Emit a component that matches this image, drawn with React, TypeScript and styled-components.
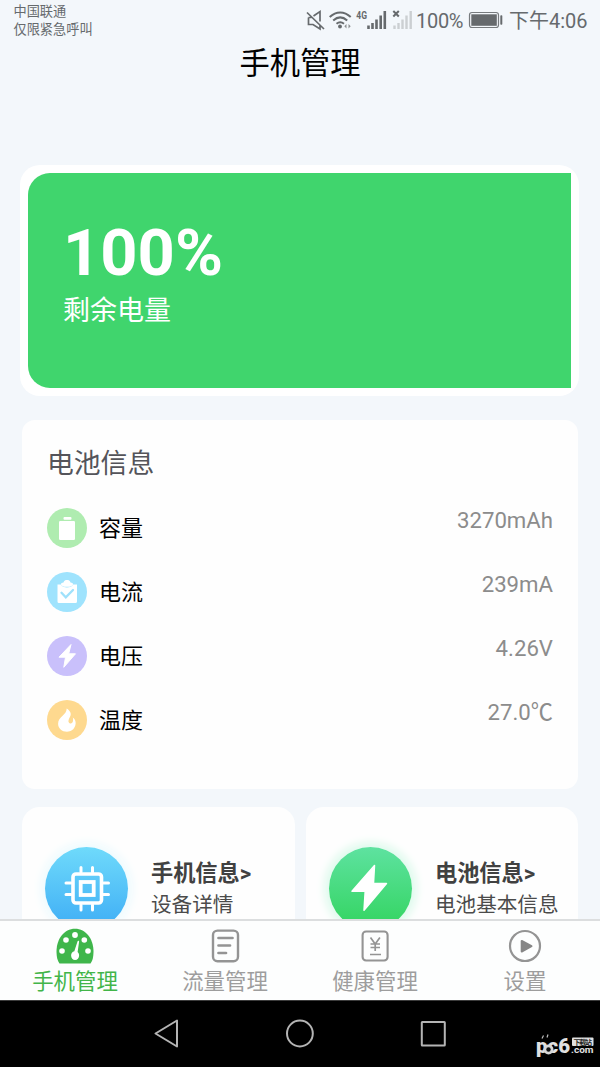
import React from "react";
import styled, { createGlobalStyle } from "styled-components";

const GlobalStyle = createGlobalStyle`
  * { box-sizing: border-box; }
  body { margin: 0; background: #f3f7fb; }
`;

const Screen = styled.div`
  width: 600px;
  height: 1067px;
  display: flex;
  flex-direction: column;
  overflow: hidden;
  background: #f3f7fb;
  font-family: Roboto, "Noto Sans CJK SC", sans-serif;
  color: #000;
  white-space: nowrap;
`;

const StatusBar = styled.header`
  height: 42px;
  flex: none;
  display: flex;
  justify-content: space-between;
  padding: 3px 13px 0 13.5px;
  color: #666a6d;
`;

const Carrier = styled.div`
  font-size: 13.2px;
  line-height: 18px;
`;

const StatusIcons = styled.div`
  display: flex;
  align-items: flex-start;
  height: 36px;
  svg { display: block; flex: none; }
`;

const StatusText = styled.span<{ $width: number; $spacing?: number }>`
  width: ${(p) => p.$width}px;
  font-size: 20px;
  line-height: 36px;
  letter-spacing: ${(p) => p.$spacing ?? 0}px;
`;

const PageTitle = styled.h1`
  margin: 0;
  height: 44px;
  flex: none;
  text-align: center;
  font-size: 30.3px;
  font-weight: 400;
  line-height: 44px;
`;

const Content = styled.main`
  height: 833px;
  flex: none;
  overflow: hidden;
  padding: 79px 22px 0;
  display: flex;
  flex-direction: column;
`;

const ChargeFrame = styled.section`
  flex: none;
  height: 231px;
  margin: 0 -1px 0 -2px;
  padding: 8px;
  border-radius: 20px;
  background: #fff;
`;

const ChargePanel = styled.div`
  height: 215px;
  border-radius: 22px 0 0 22px;
  background: #40d56d;
  color: #fff;
  padding: 42px 35px 0;
`;

const ChargeValue = styled.div`
  font-size: 65px;
  line-height: 76px;
  font-weight: 700;
`;

const ChargeLabel = styled.div`
  font-size: 27px;
  line-height: 40px;
`;

const InfoCard = styled.section`
  flex: none;
  height: 369px;
  margin-top: 24px;
  padding: 24px 25px 0;
  border-radius: 13px;
  background: #fefefe;
`;

const InfoTitle = styled.h2`
  margin: 0 0 20px;
  font-size: 26.8px;
  line-height: 40px;
  font-weight: 400;
  color: #54545a;
`;

const InfoRow = styled.div`
  height: 64px;
  display: flex;
  align-items: flex-start;
  padding-top: 4px;
`;

const RoundIcon = styled.div<{ $color: string }>`
  width: 40px;
  height: 40px;
  border-radius: 50%;
  background: ${(p) => p.$color};
  svg { display: block; }
`;

const RowLabel = styled.span`
  flex: 1;
  margin-left: 12px;
  font-size: 22px;
  line-height: 41px;
`;

const RowValue = styled.span`
  font-size: 22.2px;
  line-height: 24px;
  color: #8c8c8c;
`;

const LinkGrid = styled.div`
  flex: none;
  display: grid;
  grid-template-columns: 273px 272px;
  column-gap: 11px;
  margin-top: 18px;
`;

const LinkCard = styled.section`
  height: 160px;
  border-radius: 18px;
  background: #fefefe;
  display: flex;
  padding: 40px 0 0 23px;
`;

const Badge = styled.div<{ $from: string; $to: string; $glow: string }>`
  width: 83px;
  height: 83px;
  flex: none;
  border-radius: 50%;
  background: linear-gradient(${(p) => p.$from}, ${(p) => p.$to});
  box-shadow: 0 0 8px 5px ${(p) => p.$glow};
  svg { display: block; }
`;

const LinkText = styled.div`
  margin-left: 23px;
  padding-top: 10px;
`;

const LinkTitle = styled.div`
  font-size: 22.2px;
  line-height: 32px;
  font-weight: 700;
  color: #414141;
`;

const LinkSub = styled.div`
  font-size: 20.6px;
  line-height: 33px;
  color: #4b4b4b;
`;

const TabBar = styled.nav`
  height: 81px;
  flex: none;
  display: grid;
  grid-template-columns: repeat(4, 1fr);
  border-top: 2px solid #dcdedf;
  background: #fdfefe;
`;

const Tab = styled.div<{ $active?: boolean }>`
  display: flex;
  flex-direction: column;
  align-items: center;
  padding-top: 5px;
  color: ${(p) => (p.$active ? "#42b549" : "#9d9d9d")};
  font-size: 21.4px;
  line-height: 32px;
  svg { display: block; flex: none; }
`;

const NavBar = styled.footer`
  position: relative;
  height: 67px;
  flex: none;
  background: #000;
  border-top: 1px solid #3c3c3c;
  display: flex;
  justify-content: center;
  svg { display: block; }
`;

const Watermark = styled.div`
  position: absolute;
  right: 5px;
  top: 32px;
`;

const CapacityIcon = () => (
  <svg width="40" height="40" viewBox="0 0 40 40" fill="#fff">
    <rect x="16.5" y="9" width="8" height="2.8" rx="1" />
    <rect x="12" y="13" width="16" height="19" rx="1.2" />
  </svg>
);

const CurrentIcon = () => (
  <svg width="40" height="40" viewBox="0 0 40 40">
    <path d="M11 12.5h3c1 4 11 4 12 0h4v17a1.5 1.5 0 0 1-1.5 1.5h-17A1.5 1.5 0 0 1 10.500 29.500V12.500z" fill="#fff" />
    <path d="M14 12.200c0-1 1-1.500 2.500-1.700C17 8.500 18.500 8 20 8s3 .5 3.500 2.500c1.500.2 2.500.7 2.500 1.700 0 1.500-2.500 2.600-6 2.600s-6-1.100-6-2.600z" fill="#fff" />
    <path d="M14.500 20.800l4.300 4.500 7.200-7.300" fill="none" stroke="#9fe1fb" strokeWidth="2.300" strokeLinecap="round" />
  </svg>
);

const VoltageIcon = () => (
  <svg width="40" height="40" viewBox="0 0 40 40">
    <path d="M24 8.500L12 21.200h6.500L16.800 31.300 28.500 17.800h-6.800z" fill="#fff" stroke="#fff" strokeLinejoin="round" />
  </svg>
);

const FlameIcon = () => (
  <svg width="40" height="40" viewBox="0 0 40 40">
    <path d="M19.700 8.500c4.300 3 4.800 5.600 3.200 8.600-1.500 3-2.300 5.400.2 6.300 2.800.7 3.500-2.800 2.700-5.800 2.600 1.500 3.500 4.900 2.500 8-1.100 3.800-4.400 6.200-8.300 6.200-5 0-8.900-3.500-8.900-8 0-3.600 2-5.700 4.500-8 2.500-2.300 4-4.200 4.100-7.300z" fill="#fff" />
  </svg>
);

const ChipIcon = () => (
  <svg width="83" height="83" viewBox="0 0 83 83" fill="none" stroke="#fff" strokeLinecap="round">
    <rect x="28" y="27" width="28.500" height="29" rx="3" strokeWidth="3.600" />
    <rect x="35.700" y="35" width="13" height="13" strokeWidth="3.800" />
    <path strokeWidth="3" d="M36 25v-4.500M47.500 25v-4.500M36 58v5M47.500 58v5M26 36h-5M26 47.500h-5M58.500 36h5M58.500 47.500h5" />
  </svg>
);

const BoltIcon = () => (
  <svg width="83" height="83" viewBox="0 0 83 83">
    <path d="M45.500 18.500L23 44.300h13.200L35 63.200l22.500-26.700H44.500z" fill="#fff" stroke="#fff" strokeWidth="1.500" strokeLinejoin="round" />
  </svg>
);

const GaugeIcon = () => (
  <svg width="40" height="40" viewBox="0 0 40 40">
    <path d="M4.500 37.500C2.500 35 1.500 31 1.500 25.500 1.500 13 9 2.800 20 2.800s18.500 10.200 18.500 22.700c0 5.500-1 9.500-3 12z" fill="#3fb64b" />
    <g fill="#fff">
      <circle cx="20" cy="9" r="2.900" />
      <circle cx="11" cy="14" r="2.800" />
      <circle cx="29.300" cy="14" r="2.800" />
      <circle cx="7" cy="25" r="2.800" />
      <circle cx="33" cy="25" r="2.800" />
      <path d="M22.500 15.500c.3-1.200 1.800-1 1.600.3L22.600 26c1 .9 1.500 2 1.500 3.500 0 2.600-1.700 4.500-4 4.500s-4-1.900-4-4.500c0-2.200 1.200-3.700 3.200-4.200z" />
    </g>
  </svg>
);

const DocumentIcon = () => (
  <svg width="40" height="40" viewBox="0 0 40 40" fill="none" stroke="#949494" strokeLinecap="round">
    <rect x="8" y="4.600" width="25" height="30.600" rx="4.500" strokeWidth="2.400" />
    <path d="M13.500 12h14M13.500 19.500h11.500M13.500 27h7.500" strokeWidth="2.700" />
  </svg>
);

const BillIcon = () => (
  <svg width="40" height="40" viewBox="0 0 40 40" fill="none" stroke="#949494">
    <rect x="7.600" y="5.500" width="25" height="29" rx="3.500" strokeWidth="2.100" />
    <path d="M15.500 11.500l4.700 6.500 4.700-6.500M20.200 18v7M15.500 18h9.500M15.500 21.500h9.500M15 28.500h11" strokeWidth="1.700" />
  </svg>
);

const PlayIcon = () => (
  <svg width="40" height="40" viewBox="0 0 40 40">
    <circle cx="20" cy="20" r="15" fill="none" stroke="#949494" strokeWidth="2.200" />
    <path d="M16.700 15v10.500L26.500 20.200z" fill="#868686" stroke="#868686" strokeWidth="2" strokeLinejoin="round" />
  </svg>
);

const SignalIcons = () => (
  <svg width="111" height="36" viewBox="305 3 111 36">
    <g fill="none" stroke="#666a6d" strokeWidth="1.700">
      <path d="M307 12.500l17 16.500M313.500 16l6.500-4.500v10M308.500 17.500v7h4.500l7 4.500v-3.500M308.500 17.500h3" />
      <path d="M329.700 17c6.500-6 14.500-6 21 0M333.200 20.500c4.500-4 9.500-4 14 0M336.500 23.700c2.500-2 5-2 7.500 0" strokeWidth="2" />
    </g>
    <circle cx="340" cy="26.500" r="1.900" fill="#666a6d" />
    <path d="M346.500 24l-2.200 2.300 2.200 2.300zM348.500 24l2.200 2.300-2.200 2.300z" fill="#8c8f91" />
    <text x="356.300" y="18.600" fontSize="10" fontWeight="700" textLength="10.700" lengthAdjust="spacingAndGlyphs" fill="#666a6d">4G</text>
    <path d="M368.500 25.500v3.500M372.500 23v6M376.500 19.500v9.500M380.700 15.500v13.500M384.800 11v18" stroke="#666a6d" strokeWidth="2.600" />
    <path d="M393.300 11l5.500 5.500M398.800 11l-5.500 5.500" stroke="#666a6d" strokeWidth="2" />
    <path d="M394.500 25.500v3.500M398.500 23v6M402.500 19.500v9.500M406.500 15.500v13.500M410.700 11v18" stroke="#cbcfd2" strokeWidth="2.400" />
  </svg>
);

const BatteryIcon = () => (
  <svg width="46" height="36" viewBox="463 3 46 36">
    <rect x="469.500" y="12.500" width="29" height="15" rx="2.500" fill="none" stroke="#777b7e" strokeWidth="1.200" />
    <rect x="471.300" y="14.300" width="25.500" height="11.500" fill="#666a6d" />
    <rect x="500.300" y="15.300" width="2" height="9.500" rx=".8" fill="#666a6d" />
  </svg>
);

const NavButtons = () => (
  <svg width="340" height="66" viewBox="130 1001 340 66" fill="none" stroke="#b4b4b4" strokeWidth="2" strokeLinejoin="round">
    <path d="M155.500 1033.500l21.500-13v26z" />
    <circle cx="299.900" cy="1033.500" r="12.900" />
    <rect x="421.800" y="1022" width="23" height="23.500" rx=".5" />
  </svg>
);

const Logo = () => (
  <svg width="60" height="28" viewBox="0 0 60 28" fill="#e0e0e0">
    <text x="1" y="20" fontSize="21" fontWeight="900" fontFamily="Roboto, sans-serif" textLength="34" lengthAdjust="spacingAndGlyphs">pc6</text>
    <circle cx="13.500" cy="16.500" r="5" fill="#d7d7d7" />
    <circle cx="13.500" cy="16.500" r="2.200" fill="#111" />
    <path d="M7 5.500l1.500-3M12 4.500l1-3" stroke="#bbb" strokeWidth="1.200" />
    <rect x="37" y="4.500" width="21.500" height="8.500" rx="1" />
    <text x="38.500" y="11.500" fontSize="7" fontWeight="700" fontFamily='"Noto Sans CJK SC", sans-serif' textLength="18.500" fill="#222">下载站</text>
    <text x="36" y="20.300" fontSize="9" fontWeight="700" fontFamily="Roboto, sans-serif" textLength="22.500" lengthAdjust="spacingAndGlyphs">.com</text>
  </svg>
);

const readings = [
  { label: "容量", value: "3270mAh", color: "#afecb0", Icon: CapacityIcon },
  { label: "电流", value: "239mA", color: "#9fe3fd", Icon: CurrentIcon },
  { label: "电压", value: "4.26V", color: "#c9c0fb", Icon: VoltageIcon },
  { label: "温度", value: "27.0℃", color: "#fed98f", Icon: FlameIcon },
];

const tabs = [
  { label: "手机管理", Icon: GaugeIcon },
  { label: "流量管理", Icon: DocumentIcon },
  { label: "健康管理", Icon: BillIcon },
  { label: "设置", Icon: PlayIcon },
];

export default function App() {
  return (
    <Screen>
      <GlobalStyle />
      <StatusBar>
        <Carrier>
          <div>中国联通</div>
          <div>仅限紧急呼叫</div>
        </Carrier>
        <StatusIcons>
          <SignalIcons />
          <StatusText $width={47} $spacing={-0.3}>100%</StatusText>
          <BatteryIcon />
          <StatusText $width={78}>下午4:06</StatusText>
        </StatusIcons>
      </StatusBar>
      <PageTitle>手机管理</PageTitle>
      <Content>
        <ChargeFrame>
          <ChargePanel>
            <ChargeValue>100%</ChargeValue>
            <ChargeLabel>剩余电量</ChargeLabel>
          </ChargePanel>
        </ChargeFrame>
        <InfoCard>
          <InfoTitle>电池信息</InfoTitle>
          {readings.map(({ label, value, color, Icon }) => (
            <InfoRow key={label}>
              <RoundIcon $color={color}><Icon /></RoundIcon>
              <RowLabel>{label}</RowLabel>
              <RowValue>{value}</RowValue>
            </InfoRow>
          ))}
        </InfoCard>
        <LinkGrid>
          <LinkCard>
            <Badge $from="#6fdafb" $to="#3eadf5" $glow="#effbfe"><ChipIcon /></Badge>
            <LinkText>
              <LinkTitle>手机信息&gt;</LinkTitle>
              <LinkSub>设备详情</LinkSub>
            </LinkText>
          </LinkCard>
          <LinkCard>
            <Badge $from="#5ee2a0" $to="#32d45f" $glow="#dffaed"><BoltIcon /></Badge>
            <LinkText>
              <LinkTitle>电池信息&gt;</LinkTitle>
              <LinkSub>电池基本信息</LinkSub>
            </LinkText>
          </LinkCard>
        </LinkGrid>
      </Content>
      <TabBar>
        {tabs.map(({ label, Icon }, i) => (
          <Tab key={label} $active={i === 0}>
            <Icon />
            <span>{label}</span>
          </Tab>
        ))}
      </TabBar>
      <NavBar>
        <NavButtons />
        <Watermark><Logo /></Watermark>
      </NavBar>
    </Screen>
  );
}
